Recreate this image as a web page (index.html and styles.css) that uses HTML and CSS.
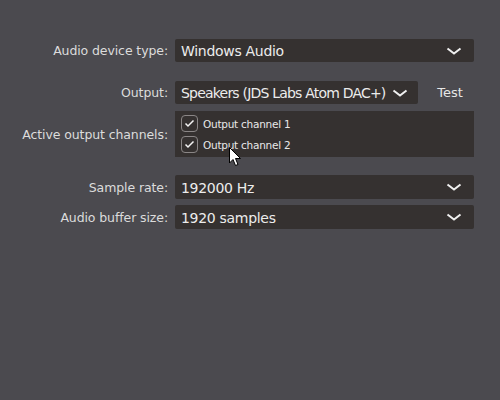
FILE: index.html
```html
<!DOCTYPE html>
<html>
<head>
<meta charset="utf-8">
<link rel="stylesheet" href="styles.css">
</head>
<body>
<div class="panel">
  <div class="row r1">
    <div class="label">Audio device type:</div>
    <div class="combo"><span>Windows Audio</span><svg class="chev" width="16" height="9" viewBox="0 0 16 9"><path d="M1.5 1.5 L8 6.5 L14.5 1.5" fill="none" stroke="#f0f0f0" stroke-width="2"/></svg></div>
  </div>
  <div class="row r2">
    <div class="label">Output:</div>
    <div class="outwrap">
      <div class="combo short"><span class="tight">Speakers (JDS Labs Atom DAC+)</span><svg class="chev" width="16" height="9" viewBox="0 0 16 9"><path d="M1.5 1.5 L8 6.5 L14.5 1.5" fill="none" stroke="#f0f0f0" stroke-width="2"/></svg></div>
      <div class="test">Test</div>
    </div>
  </div>
  <div class="row r3">
    <div class="label">Active output channels:</div>
    <div class="channels">
      <div class="chk"><span class="box"><svg width="11" height="9" viewBox="0 0 11 9"><path d="M1.5 4.5 L4 7 L9.5 1.5" fill="none" stroke="#f4f4f4" stroke-width="1.5"/></svg></span><span>Output channel 1</span></div>
      <div class="chk"><span class="box"><svg width="11" height="9" viewBox="0 0 11 9"><path d="M1.5 4.5 L4 7 L9.5 1.5" fill="none" stroke="#f4f4f4" stroke-width="1.5"/></svg></span><span>Output channel 2</span></div>
    </div>
  </div>
  <div class="row r4">
    <div class="label">Sample rate:</div>
    <div class="combo tall"><span>192000 Hz</span><svg class="chev" width="16" height="9" viewBox="0 0 16 9"><path d="M1.5 1.5 L8 6.5 L14.5 1.5" fill="none" stroke="#f0f0f0" stroke-width="2"/></svg></div>
  </div>
  <div class="row r5">
    <div class="label">Audio buffer size:</div>
    <div class="combo tall"><span>1920 samples</span><svg class="chev" width="16" height="9" viewBox="0 0 16 9"><path d="M1.5 1.5 L8 6.5 L14.5 1.5" fill="none" stroke="#f0f0f0" stroke-width="2"/></svg></div>
  </div>
</div>
<svg class="cursor" width="14" height="22" viewBox="0 0 14 22"><path d="M0.5 0.5 L0.5 16 L4 12.5 L6.5 18.5 L9 17.5 L6.5 11.5 L11.5 11.5 Z" fill="#ffffff" stroke="#000000" stroke-width="1"/></svg>
</body>
</html>
```
FILE: styles.css
```css
html, body {
  margin: 0;
  padding: 0;
  width: 500px;
  height: 400px;
  background: #4b4a4f;
  overflow: hidden;
  font-family: "DejaVu Sans", Verdana, sans-serif;
}
.panel {
  padding-top: 39px;
  display: flex;
  flex-direction: column;
}
.row {
  display: grid;
  grid-template-columns: 168px 299px;
  column-gap: 7px;
  align-items: center;
}
.r2 { margin-top: 19px; }
.r3 { margin-top: 7px; }
.r4 { margin-top: 18px; }
.r5 { margin-top: 6px; }
.label {
  text-align: right;
  color: #dcdcdc;
  font-size: 12.5px;
  letter-spacing: -0.1px;
  white-space: nowrap;
}
.combo {
  height: 23px;
  background: #353130;
  border-radius: 2px;
  display: flex;
  align-items: center;
  justify-content: space-between;
  padding: 0 12px 0 6px;
  color: #ececec;
  font-size: 14px;
  letter-spacing: -0.3px;
  white-space: nowrap;
}
.combo.tall { height: 24px; }
.combo span { margin-top: 1px; }
.combo .chev { margin-top: 1px; }
.tight { letter-spacing: -0.8px; }
.outwrap {
  display: flex;
  align-items: center;
}
.combo.short {
  width: 243px;
  padding-right: 10px;
  box-sizing: border-box;
}
.test {
  flex: 1;
  text-align: center;
  padding-left: 8px;
  color: #e6e6e6;
  font-size: 13px;
}
.channels {
  height: 46px;
  background: #353130;
  display: flex;
  flex-direction: column;
  justify-content: center;
  gap: 4px;
  padding-left: 6px;
}
.chk {
  display: flex;
  align-items: center;
  gap: 5px;
  color: #e8e8e8;
  font-size: 10.5px;
  letter-spacing: -0.25px;
}
.box {
  width: 15px;
  height: 15px;
  border: 1px solid #8a8686;
  border-radius: 4px;
  display: flex;
  align-items: center;
  justify-content: center;
}
.cursor {
  position: absolute;
  left: 229px;
  top: 147px;
}
```
